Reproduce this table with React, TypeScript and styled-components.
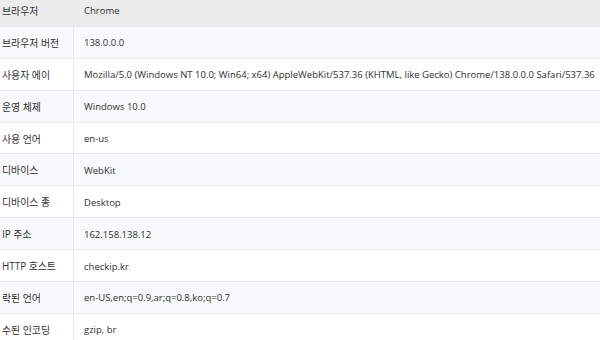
import React from "react";
import styled, { createGlobalStyle } from "styled-components";

const Global = createGlobalStyle`
  html, body { margin: 0; padding: 0; background: #ffffff; overflow: hidden; }
  body { font-family: "Open Sans", "Noto Sans CJK KR", sans-serif; }
`;

const Table = styled.div`
  margin-top: -5px;
  width: 600px;
  display: flex;
  flex-direction: column;
  font-family: "Open Sans", "Noto Sans CJK KR", sans-serif;
  font-size: 9.5px;
  color: #2f2f2f;
`;

const Row = styled.div<{ $bg: string }>`
  display: grid;
  grid-template-columns: 74px 1fr;
  height: 31.9px;
  background: ${(p) => p.$bg};
  border-bottom: 1px solid #e8eaed;
  box-sizing: border-box;
`;

const Label = styled.div`
  display: flex;
  align-items: center;
  padding: 1px 0 0 2px;
  font-size: 9.9px;
  border-right: 1px solid #e8eaed;
  white-space: nowrap;
  overflow: hidden;
`;

const Value = styled.div`
  display: flex;
  align-items: center;
  padding: 1px 0 0 10px;
  white-space: nowrap;
  overflow: hidden;
`;

const rows: [string, string][] = [
  ["브라우저", "Chrome"],
  ["브라우저 버전", "138.0.0.0"],
  [
    "사용자 에이",
    "Mozilla/5.0 (Windows NT 10.0; Win64; x64) AppleWebKit/537.36 (KHTML, like Gecko) Chrome/138.0.0.0 Safari/537.36",
  ],
  ["운영 체제", "Windows 10.0"],
  ["사용 언어", "en-us"],
  ["디바이스", "WebKit"],
  ["디바이스 종", "Desktop"],
  ["IP 주소", "162.158.138.12"],
  ["HTTP 호스트", "checkip.kr"],
  ["락된 언어", "en-US,en;q=0.9,ar;q=0.8,ko;q=0.7"],
  ["수된 인코딩", "gzip, br"],
];

export default function App() {
  return (
    <>
      <Global />
      <Table>
        {rows.map(([k, v], i) => (
          <Row key={k} $bg={i === 0 ? "#ececec" : i % 2 === 1 ? "#f8f9fa" : "#ffffff"}>
            <Label>{k}</Label>
            <Value>{v}</Value>
          </Row>
        ))}
      </Table>
    </>
  );
}
